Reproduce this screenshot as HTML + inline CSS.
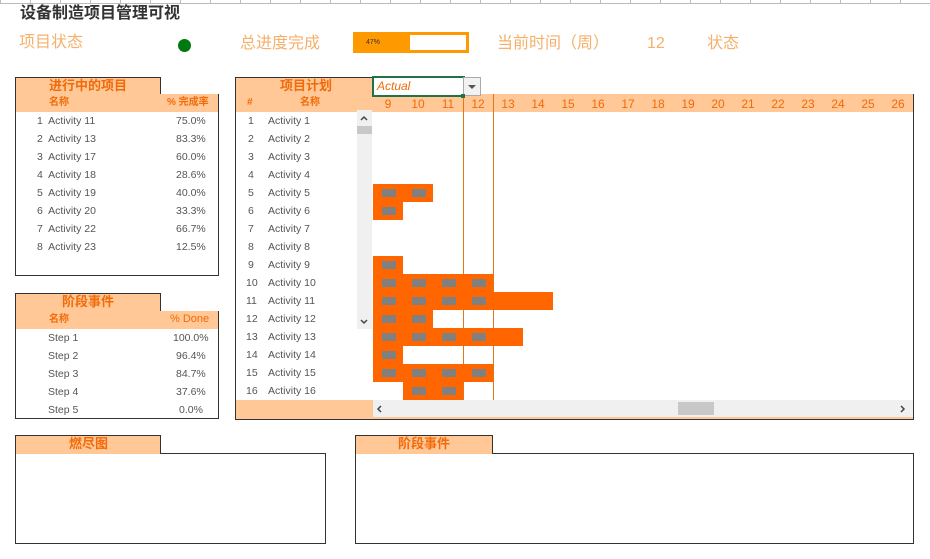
<!DOCTYPE html>
<html><head><meta charset="utf-8"><style>
body{margin:0;width:930px;height:559px;background:#fff;position:relative;overflow:hidden;font-family:"Liberation Sans","Noto Sans CJK SC",sans-serif;}
div,span{position:absolute;box-sizing:border-box;}
.t{white-space:nowrap;line-height:1;}
.pe{background:#ffc896;}
.or{color:#f26a0a;}
.b{font-weight:bold;}
.cell{font-size:10.5px;color:#555;}
.bar{background:#ff6600;}
.sq{background:#808080;width:14px;height:8px;}
</style></head><body>
<div style="left:0;top:0;width:930px;height:4px;background:#fff;border-bottom:1px solid #bbb;"></div>
<div style="left:0;top:0;width:930px;height:4px;background:repeating-linear-gradient(90deg,#bbb 0 1px,transparent 1px 30px);"></div>

<div class="t" style="left:20px;top:6px;font-size:16px;font-weight:bold;color:#333;">设备制造项目管理可视</div>
<div class="t" style="left:19px;top:35px;font-size:16px;color:#f5b06a;">项目状态</div>
<div style="left:178px;top:39px;width:13px;height:13px;border-radius:50%;background:#007a10;"></div>
<div class="t" style="left:240px;top:36px;font-size:16px;color:#f5b06a;">总进度完成</div>
<div style="left:353px;top:32px;width:116px;height:21px;background:#ff9900;"></div>
<div style="left:410px;top:35px;width:56px;height:15px;background:#fff;"></div>
<div class="t" style="left:366px;top:39px;font-size:7px;color:#333;">47%</div>
<div class="t" style="left:497px;top:36px;font-size:16px;color:#f5b06a;">当前时间（周）</div>
<div class="t" style="left:647px;top:36px;font-size:16px;color:#f5b06a;">12</div>
<div class="t" style="left:707px;top:36px;font-size:16px;color:#f5b06a;">状态</div>

<!-- Panel 1 -->
<div style="left:15px;top:94px;width:204px;height:182px;border:1px solid #333;"></div>
<div class="pe" style="left:15px;top:77px;width:146px;height:19px;border:1px solid #333;border-bottom:none;"></div>
<div class="pe" style="left:16px;top:94px;width:202px;height:18px;"></div>
<div class="t or b" style="left:49px;top:79px;font-size:13px;">进行中的项目</div>
<div class="t or b" style="left:49px;top:98px;font-size:10px;">名称</div>
<div class="t or b" style="left:167px;top:98px;font-size:10px;">% 完成率</div>
<div class="cell">
<div class="t" style="left:37px;top:116px;">1&nbsp; Activity 11</div><div class="t" style="left:176px;top:116px;">75.0%</div>
<div class="t" style="left:37px;top:134px;">2&nbsp; Activity 13</div><div class="t" style="left:176px;top:134px;">83.3%</div>
<div class="t" style="left:37px;top:152px;">3&nbsp; Activity 17</div><div class="t" style="left:176px;top:152px;">60.0%</div>
<div class="t" style="left:37px;top:170px;">4&nbsp; Activity 18</div><div class="t" style="left:176px;top:170px;">28.6%</div>
<div class="t" style="left:37px;top:188px;">5&nbsp; Activity 19</div><div class="t" style="left:176px;top:188px;">40.0%</div>
<div class="t" style="left:37px;top:206px;">6&nbsp; Activity 20</div><div class="t" style="left:176px;top:206px;">33.3%</div>
<div class="t" style="left:37px;top:224px;">7&nbsp; Activity 22</div><div class="t" style="left:176px;top:224px;">66.7%</div>
<div class="t" style="left:37px;top:242px;">8&nbsp; Activity 23</div><div class="t" style="left:176px;top:242px;">12.5%</div>
</div>

<!-- Panel 2 -->
<div style="left:15px;top:311px;width:204px;height:108px;border:1px solid #333;"></div>
<div class="pe" style="left:15px;top:293px;width:146px;height:19px;border:1px solid #333;border-bottom:none;"></div>
<div class="pe" style="left:16px;top:311px;width:202px;height:18px;"></div>
<div class="t or b" style="left:62px;top:295px;font-size:13px;">阶段事件</div>
<div class="t or b" style="left:49px;top:315px;font-size:10px;">名称</div>
<div class="t or" style="left:170px;top:314px;font-size:11px;">% Done</div>
<div class="cell">
<div class="t" style="left:48px;top:333px;">Step 1</div><div class="t" style="left:173px;top:333px;">100.0%</div>
<div class="t" style="left:48px;top:351px;">Step 2</div><div class="t" style="left:176px;top:351px;">96.4%</div>
<div class="t" style="left:48px;top:369px;">Step 3</div><div class="t" style="left:176px;top:369px;">84.7%</div>
<div class="t" style="left:48px;top:387px;">Step 4</div><div class="t" style="left:176px;top:387px;">37.6%</div>
<div class="t" style="left:48px;top:405px;">Step 5</div><div class="t" style="left:179px;top:405px;">0.0%</div>
</div>

<!-- Main gantt panel -->
<div style="left:235px;top:94px;width:679px;height:326px;border:1px solid #333;"></div>
<div class="pe" style="left:235px;top:77px;width:138px;height:19px;border:1px solid #333;border-bottom:none;border-right:none;"></div>
<div class="pe" style="left:236px;top:94px;width:677px;height:18px;"></div>
<div class="t or b" style="left:280px;top:79px;font-size:13px;">项目计划</div>
<div class="t or b" style="left:247px;top:98px;font-size:10px;">#</div>
<div class="t or b" style="left:300px;top:98px;font-size:10px;">名称</div>
<div class="or" style="left:373px;top:97px;width:540px;height:14px;font-size:12px;display:flex;">
<span style="position:static;width:30px;text-align:center">9</span><span style="position:static;width:30px;text-align:center">10</span><span style="position:static;width:30px;text-align:center">11</span><span style="position:static;width:30px;text-align:center">12</span><span style="position:static;width:30px;text-align:center">13</span><span style="position:static;width:30px;text-align:center">14</span><span style="position:static;width:30px;text-align:center">15</span><span style="position:static;width:30px;text-align:center">16</span><span style="position:static;width:30px;text-align:center">17</span><span style="position:static;width:30px;text-align:center">18</span><span style="position:static;width:30px;text-align:center">19</span><span style="position:static;width:30px;text-align:center">20</span><span style="position:static;width:30px;text-align:center">21</span><span style="position:static;width:30px;text-align:center">22</span><span style="position:static;width:30px;text-align:center">23</span><span style="position:static;width:30px;text-align:center">24</span><span style="position:static;width:30px;text-align:center">25</span><span style="position:static;width:30px;text-align:center">26</span>
</div>
<!-- week lines (under bars) -->
<div style="left:463px;top:94px;width:1px;height:306px;background:#e07818;"></div>
<div style="left:493px;top:94px;width:1px;height:306px;background:#e07818;"></div>
<!-- dropdown -->
<div style="left:372px;top:76px;width:93px;height:21px;background:#fff;border:2px solid #217346;"></div>
<div class="t" style="left:377px;top:80px;font-size:12px;font-style:italic;color:#f26a0a;">Actual</div>
<div style="left:463px;top:77px;width:18px;height:19px;background:#f2f2f2;border:1px solid #aaa;"></div>
<div style="left:468px;top:85px;width:0;height:0;border-left:4px solid transparent;border-right:4px solid transparent;border-top:4px solid #555;"></div>
<div style="left:461px;top:94px;width:4px;height:4px;background:#217346;"></div>

<div class="cell">
<div class="t" style="left:248px;top:116px;">1</div><div class="t" style="left:268px;top:116px;">Activity 1</div>
<div class="t" style="left:248px;top:134px;">2</div><div class="t" style="left:268px;top:134px;">Activity 2</div>
<div class="t" style="left:248px;top:152px;">3</div><div class="t" style="left:268px;top:152px;">Activity 3</div>
<div class="t" style="left:248px;top:170px;">4</div><div class="t" style="left:268px;top:170px;">Activity 4</div>
<div class="t" style="left:248px;top:188px;">5</div><div class="t" style="left:268px;top:188px;">Activity 5</div>
<div class="t" style="left:248px;top:206px;">6</div><div class="t" style="left:268px;top:206px;">Activity 6</div>
<div class="t" style="left:248px;top:224px;">7</div><div class="t" style="left:268px;top:224px;">Activity 7</div>
<div class="t" style="left:248px;top:242px;">8</div><div class="t" style="left:268px;top:242px;">Activity 8</div>
<div class="t" style="left:248px;top:260px;">9</div><div class="t" style="left:268px;top:260px;">Activity 9</div>
<div class="t" style="left:246px;top:278px;">10</div><div class="t" style="left:268px;top:278px;">Activity 10</div>
<div class="t" style="left:246px;top:296px;">11</div><div class="t" style="left:268px;top:296px;">Activity 11</div>
<div class="t" style="left:246px;top:314px;">12</div><div class="t" style="left:268px;top:314px;">Activity 12</div>
<div class="t" style="left:246px;top:332px;">13</div><div class="t" style="left:268px;top:332px;">Activity 13</div>
<div class="t" style="left:246px;top:350px;">14</div><div class="t" style="left:268px;top:350px;">Activity 14</div>
<div class="t" style="left:246px;top:368px;">15</div><div class="t" style="left:268px;top:368px;">Activity 15</div>
<div class="t" style="left:246px;top:386px;">16</div><div class="t" style="left:268px;top:386px;">Activity 16</div>
</div>

<!-- vertical scrollbar -->
<div style="left:357px;top:110px;width:15px;height:219px;background:#f0f0f0;"></div>
<div style="left:357px;top:126px;width:15px;height:8px;background:#c8c8c8;"></div>
<svg style="position:absolute;left:359px;top:114px" width="10" height="8"><path d="M2 6 L5 3 L8 6" stroke="#444" stroke-width="1.5" fill="none"/></svg>
<svg style="position:absolute;left:359px;top:318px" width="10" height="8"><path d="M2 2 L5 5 L8 2" stroke="#444" stroke-width="1.5" fill="none"/></svg>

<!-- bars -->
<div class="bar" style="left:373px;top:184px;width:60px;height:18px;"></div>
<div class="bar" style="left:373px;top:202px;width:30px;height:18px;"></div>
<div class="bar" style="left:373px;top:256px;width:30px;height:18px;"></div>
<div class="bar" style="left:373px;top:274px;width:120px;height:18px;"></div>
<div class="bar" style="left:373px;top:292px;width:180px;height:18px;"></div>
<div class="bar" style="left:373px;top:310px;width:60px;height:18px;"></div>
<div class="bar" style="left:373px;top:328px;width:150px;height:18px;"></div>
<div class="bar" style="left:373px;top:346px;width:30px;height:18px;"></div>
<div class="bar" style="left:373px;top:364px;width:120px;height:18px;"></div>
<div class="bar" style="left:403px;top:382px;width:60px;height:18px;"></div>
<div class="sq" style="left:382px;top:189px"></div><div class="sq" style="left:412px;top:189px"></div>
<div class="sq" style="left:382px;top:207px"></div>
<div class="sq" style="left:382px;top:261px"></div>
<div class="sq" style="left:382px;top:279px"></div><div class="sq" style="left:412px;top:279px"></div><div class="sq" style="left:442px;top:279px"></div><div class="sq" style="left:472px;top:279px"></div>
<div class="sq" style="left:382px;top:297px"></div><div class="sq" style="left:412px;top:297px"></div><div class="sq" style="left:442px;top:297px"></div><div class="sq" style="left:472px;top:297px"></div>
<div class="sq" style="left:382px;top:315px"></div><div class="sq" style="left:412px;top:315px"></div>
<div class="sq" style="left:382px;top:333px"></div><div class="sq" style="left:412px;top:333px"></div><div class="sq" style="left:442px;top:333px"></div><div class="sq" style="left:472px;top:333px"></div>
<div class="sq" style="left:382px;top:351px"></div>
<div class="sq" style="left:382px;top:369px"></div><div class="sq" style="left:412px;top:369px"></div><div class="sq" style="left:442px;top:369px"></div><div class="sq" style="left:472px;top:369px"></div>
<div class="sq" style="left:412px;top:387px"></div><div class="sq" style="left:442px;top:387px"></div>

<!-- bottom scroll row -->
<div class="pe" style="left:236px;top:400px;width:137px;height:19px;"></div>
<div style="left:373px;top:400px;width:540px;height:17px;background:#f0f0f0;"></div>
<div style="left:373px;top:417px;width:540px;height:2px;background:#ffc896;"></div>
<div style="left:678px;top:402px;width:36px;height:13px;background:#c8c8c8;"></div>
<svg style="position:absolute;left:375px;top:404px" width="8" height="10"><path d="M6 2 L3 5 L6 8" stroke="#444" stroke-width="1.5" fill="none"/></svg>
<svg style="position:absolute;left:899px;top:404px" width="8" height="10"><path d="M2 2 L5 5 L2 8" stroke="#444" stroke-width="1.5" fill="none"/></svg>

<!-- bottom panels -->
<div style="left:15px;top:453px;width:311px;height:91px;border:1px solid #333;"></div>
<div class="pe" style="left:15px;top:435px;width:146px;height:19px;border:1px solid #333;border-bottom:none;"></div>
<div class="t or b" style="left:69px;top:437px;font-size:13px;">燃尽图</div>

<div style="left:355px;top:453px;width:559px;height:91px;border:1px solid #333;"></div>
<div class="pe" style="left:355px;top:435px;width:138px;height:19px;border:1px solid #333;border-bottom:none;"></div>
<div class="t or b" style="left:398px;top:437px;font-size:13px;">阶段事件</div>
</body></html>
